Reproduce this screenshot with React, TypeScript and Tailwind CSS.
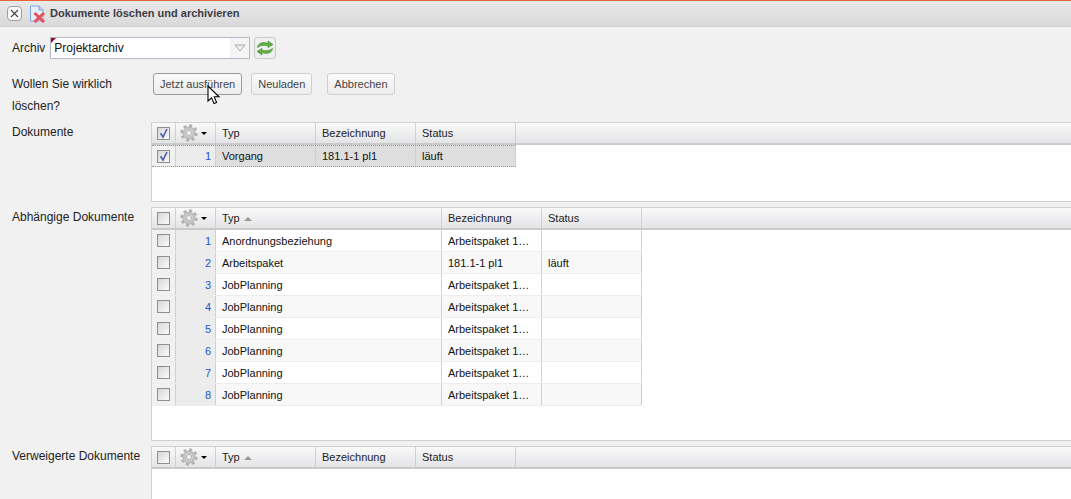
import React from "react";

type Col = { label: string; w: number; sort?: boolean };
type Row = { typ: string; bez: string; status: string };

function Check({ checked }: { checked?: boolean }) {
  return (
    <div className="w-[13px] h-[13px] border border-[#8f8f8f] bg-gradient-to-br from-[#d6d6d6] to-[#fbfbfb] flex items-center justify-center">
      {checked && (
        <svg width="11" height="11" viewBox="0 0 11 11" className="shrink-0">
          <path d="M2.6 5.2 L5 9 L9 1" fill="none" stroke="#4a5cb0" strokeWidth="1.6" />
        </svg>
      )}
    </div>
  );
}

function Gear() {
  return (
    <svg width="18" height="18" viewBox="0 0 18 18">
      <circle cx="9" cy="9" r="7.4" fill="none" stroke="#b0b0b0" strokeWidth="2.6" strokeDasharray="2.9 2.9" />
      <circle cx="9" cy="9" r="4.8" fill="none" stroke="#c4c4c4" strokeWidth="3" />
      <circle cx="9" cy="9" r="6.2" fill="none" stroke="#a0a0a0" strokeWidth="0.5" />
      <circle cx="9" cy="9" r="2.6" fill="#f0f0f0" stroke="#959595" strokeWidth="0.7" />
    </svg>
  );
}

function DataGrid({
  cols,
  rows,
  selected,
  headChecked,
  bodyH,
}: {
  cols: Col[];
  rows: Row[];
  selected?: boolean;
  headChecked?: boolean;
  bodyH: number;
}) {
  const tableW = cols.reduce((a, c) => a + c.w, 0) + 64;
  const textPad = selected ? "pt-[1px]" : "pt-[2px]";
  return (
    <div className="flex-1 min-w-0 border-l border-t border-b border-[#d0d0d0] bg-white">
      <div className="flex h-[22px] border-b-2 border-[#cacaca] bg-gradient-to-b from-[#f9f9f9] to-[#e3e4e6] text-[#222]">
        <div className="w-[24px] shrink-0 border-r border-[#d0d0d0] flex items-center justify-center">
          <Check checked={headChecked} />
        </div>
        <div className="w-[40px] shrink-0 border-r border-[#d0d0d0] flex items-center pl-[4px] gap-[3px]">
          <Gear />
          <div className="w-0 h-0 border-l-[3px] border-r-[3px] border-t-[3px] border-l-transparent border-r-transparent border-t-black" />
        </div>
        {cols.map((c) => (
          <div
            key={c.label}
            style={{ width: c.w }}
            className="shrink-0 border-r border-[#d0d0d0] flex items-center pl-[6px] pt-[1px] gap-[4px]"
          >
            {c.label}
            {c.sort && (
              <div className="w-0 h-0 border-l-[4px] border-r-[4px] border-b-[4px] border-l-transparent border-r-transparent border-b-[#999999]" />
            )}
          </div>
        ))}
      </div>
      <div style={{ height: bodyH }} className="bg-white">
        {rows.map((r, i) => (
          <div
            key={i}
            style={{ width: tableW }}
            className={
              "flex h-[22px] text-[#111] " +
              (selected
                ? "bg-[#dedede] border-y border-dotted border-[#9a9a9a]"
                : i % 2 === 1
                ? "bg-[#f8f8f8] border-b border-[#ededed]"
                : "bg-white border-b border-[#ededed]")
            }
          >
            <div className="w-[24px] shrink-0 border-r border-[#d0d0d0] flex items-center justify-center bg-[#f1f1f1]">
              <Check checked={selected} />
            </div>
            <div className={"w-[40px] shrink-0 border-r border-[#d0d0d0] flex items-center justify-end pr-[4px] text-[#2255cc] bg-[#ececec] " + textPad}>
              {i + 1}
            </div>
            <div style={{ width: cols[0].w }} className={"shrink-0 border-r border-[#d0d0d0] flex items-center pl-[6px] " + textPad}>
              {r.typ}
            </div>
            <div style={{ width: cols[1].w }} className={"shrink-0 border-r border-[#d0d0d0] flex items-center pl-[6px] " + textPad}>
              {r.bez}
            </div>
            <div style={{ width: cols[2].w }} className={"shrink-0 border-r border-[#d0d0d0] flex items-center pl-[6px] " + textPad}>
              {r.status}
            </div>
          </div>
        ))}
      </div>
    </div>
  );
}

function Btn({ children, dark }: { children: React.ReactNode; dark?: boolean }) {
  return (
    <button
      className={
        "h-[22px] px-[6px] rounded-[3px] border bg-gradient-to-b from-[#fafafa] to-[#ececec] text-[#444] text-[11px] " +
        (dark ? "border-[#9a9a9a]" : "border-[#cfcfcf]")
      }
    >
      {children}
    </button>
  );
}

const jp = { typ: "JobPlanning", bez: "Arbeitspaket 1…", status: "" };

export default function App() {
  const narrow: Col[] = [
    { label: "Typ", w: 100 },
    { label: "Bezeichnung", w: 100 },
    { label: "Status", w: 100 },
  ];
  const narrowSort: Col[] = [
    { label: "Typ", w: 100, sort: true },
    { label: "Bezeichnung", w: 100 },
    { label: "Status", w: 100 },
  ];
  const wide: Col[] = [
    { label: "Typ", w: 226, sort: true },
    { label: "Bezeichnung", w: 100 },
    { label: "Status", w: 100 },
  ];
  return (
    <div className="relative h-[499px] w-[1071px] overflow-hidden bg-[#f1f1f1] text-[11px] font-['Liberation_Sans',Arial,sans-serif]">
      {/* title bar */}
      <div className="h-[27px] border-t border-t-[#e8623a] border-b border-b-[#d0d0d0] bg-gradient-to-b from-[#e9e9e9] to-[#d9d9d9] flex items-center pl-[7px]">
        <button className="w-[15px] h-[15px] rounded-[4px] border border-[#a0a0a0] bg-[#f8f8f8] flex items-center justify-center">
          <svg width="9" height="9" viewBox="0 0 9 9">
            <path d="M1 1 L8 8 M8 1 L1 8" stroke="#444" strokeWidth="1.1" />
          </svg>
        </button>
        <svg width="18" height="18" viewBox="0 0 18 18" className="ml-[7px]">
          <path d="M1.5 1 H10 L14 5 V16 H1.5 Z" fill="#e6f0fb" stroke="#78a8e0" />
          <path d="M10 1 V5 H14" fill="#bcd4f0" stroke="#78a8e0" />
          <path d="M5.5 8 L15 17 M15 8 L5.5 17" stroke="#e8505a" strokeWidth="3" />
        </svg>
        <span className="ml-[3px] font-bold text-[#3c3c46]">Dokumente löschen und archivieren</span>
      </div>

      {/* archive row */}
      <div className="flex items-center mt-[9px] pl-[12px] h-[23px]">
        <span className="text-[12px] text-[#222]">Archiv</span>
        <div className="relative ml-[5px] w-[200px] h-[22px] border border-[#b5b8c8] bg-white flex items-center justify-between">
          <div className="absolute left-0 top-0 w-0 h-0 border-t-[5px] border-r-[5px] border-t-[#a00020] border-r-transparent" />
          <span className="pl-[3px] text-[12px] text-[#111]">Projektarchiv</span>
          <div className="w-[19px] h-full bg-[#f4f4f4] flex items-center justify-center">
            <svg width="12" height="8" viewBox="0 0 12 8">
              <path d="M1 1 H11 L6 7 Z" fill="#eeeeee" stroke="#a8a8a8" />
            </svg>
          </div>
        </div>
        <button className="ml-[4px] w-[22px] h-[22px] rounded-[3px] border border-[#c8c8c8] bg-[#efefef] flex items-center justify-center">
          <svg width="18" height="16" viewBox="0 0 18 16">
            <path d="M1.5 7.5 C2 3 7 1.5 12 3.4 V1 L17 4.6 L12 7.6 V5.8 C8 4.8 4.5 5.2 1.5 7.5 Z" fill="#63b043" stroke="#3d8a2a" strokeWidth="0.6" />
            <path d="M16.5 8.5 C16 13 11 14.5 6 12.6 V15 L1 11.4 L6 8.4 V10.2 C10 11.2 13.5 10.8 16.5 8.5 Z" fill="#63b043" stroke="#3d8a2a" strokeWidth="0.6" />
          </svg>
        </button>
      </div>

      {/* question row */}
      <div className="flex mt-[14px] pl-[12px]">
        <div className="w-[141px] shrink-0 text-[12px] leading-[22px] text-[#222]">
          Wollen Sie wirklich<br />löschen?
        </div>
        <div className="flex items-start">
          <Btn dark>Jetzt ausführen</Btn>
          <div className="w-[9px]" />
          <Btn>Neuladen</Btn>
          <div className="w-[15px]" />
          <Btn>Abbrechen</Btn>
        </div>
      </div>

      {/* grids */}
      <div className="flex mt-[5px] pl-[12px]">
        <div className="w-[139px] shrink-0 pt-[1px] text-[12px] text-[#222]">Dokumente</div>
        <DataGrid
          cols={narrow}
          headChecked
          selected
          bodyH={56}
          rows={[{ typ: "Vorgang", bez: "181.1-1 pl1", status: "läuft" }]}
        />
      </div>
      <div className="flex mt-[5px] pl-[12px]">
        <div className="w-[139px] shrink-0 pt-[1px] text-[12px] text-[#222]">Abhängige Dokumente</div>
        <DataGrid
          cols={wide}
          bodyH={210}
          rows={[
            { typ: "Anordnungsbeziehung", bez: "Arbeitspaket 1…", status: "" },
            { typ: "Arbeitspaket", bez: "181.1-1 pl1", status: "läuft" },
            jp, jp, jp, jp, jp, jp,
          ]}
        />
      </div>
      <div className="flex mt-[5px] pl-[12px]">
        <div className="w-[139px] shrink-0 pt-[1px] text-[12px] text-[#222]">Verweigerte Dokumente</div>
        <DataGrid cols={narrowSort} bodyH={60} rows={[]} />
      </div>

      {/* mouse pointer */}
      <svg width="15" height="22" viewBox="0 0 15 22" className="absolute left-[207px] top-[85px]">
        <path d="M1 1 V16 L4.6 12.8 L7 18.6 L9.6 17.4 L7.2 11.8 H12 Z" fill="#fff" stroke="#000" strokeWidth="1.1" />
      </svg>
    </div>
  );
}
